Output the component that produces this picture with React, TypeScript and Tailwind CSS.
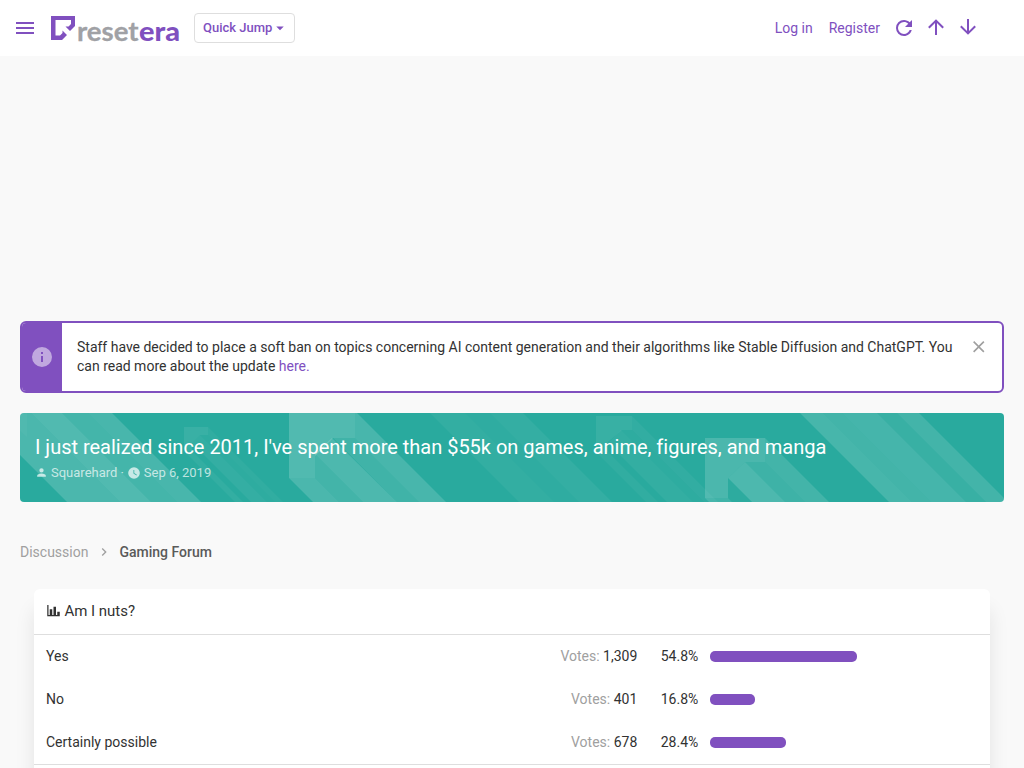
import React from "react";

const paths = {
  menu: "M3,6H21V8H3V6M3,11H21V13H3V11M3,16H21V18H3V16Z",
  refresh:
    "M17.65,6.35C16.2,4.9 14.21,4 12,4A8,8 0 0,0 4,12A8,8 0 0,0 12,20C15.73,20 18.84,17.45 19.73,14H17.65C16.83,16.33 14.61,18 12,18A6,6 0 0,1 6,12A6,6 0 0,1 12,6C13.66,6 15.14,6.69 16.22,7.78L13,11H20V4L17.65,6.35Z",
  up: "M13,20H11V8L5.5,13.5L4.08,12.08L12,4.16L19.92,12.08L18.5,13.5L13,8V20Z",
  down: "M11,4H13V16L18.5,10.5L19.92,11.92L12,19.84L4.08,11.92L5.5,10.5L11,16V4Z",
  chart: "M22,21H2V3H4V19H6V10H10V19H12V6H16V19H18V14H22V21Z",
  account:
    "M12,4A4,4 0 0,1 16,8A4,4 0 0,1 12,12A4,4 0 0,1 8,8A4,4 0 0,1 12,4M12,14C16.42,14 20,15.79 20,18V20H4V18C4,15.79 7.58,14 12,14Z",
  clock:
    "M12,2A10,10 0 0,0 2,12A10,10 0 0,0 12,22A10,10 0 0,0 22,12A10,10 0 0,0 12,2M16.2,16.2L11,13V7H12.5V12.2L17,14.9L16.2,16.2Z",
  info: "M13,9H11V7H13M13,17H11V11H13M12,2A10,10 0 0,0 2,12A10,10 0 0,0 12,22A10,10 0 0,0 22,12A10,10 0 0,0 12,2Z",
  close:
    "M19,6.41L17.59,5L12,10.59L6.41,5L5,6.41L10.59,12L5,17.59L6.41,19L12,13.41L17.59,19L19,17.59L13.41,12L19,6.41Z",
  caret: "M7,10L12,15L17,10H7Z",
  chevron: "M8.59,16.58L13.17,12L8.59,7.41L10,6L16,12L10,18L8.59,16.58Z",
};

function Icon({ name, className }: { name: keyof typeof paths; className: string }) {
  return (
    <svg viewBox="0 0 24 24" fill="currentColor" className={"shrink-0 " + className}>
      <path d={paths[name]} />
    </svg>
  );
}

function Logo() {
  return (
    <svg width="130" height="44" viewBox="0 -7 130 44" className="ml-[14px] shrink-0">
      <path
        fill="#8050bf"
        d="M0 3H24V13L19 18L14.5 13.5H17.5L20 11V7H4.5V22.5H9L11.5 20V17.5L16 22L11 27H0Z"
      />
      <g fontFamily="Lato, sans-serif" fontSize="26">
        <text x="26" y="27.5" fontWeight="700" fill="#a0a1a5" stroke="#a0a1a5" strokeWidth="0.3" textLength="61.5" lengthAdjust="spacingAndGlyphs">
          reset
        </text>
        <text x="88" y="27.5" fontWeight="900" fill="#8050bf" textLength="41" lengthAdjust="spacingAndGlyphs">
          era
        </text>
      </g>
    </svg>
  );
}

const shapes: [string, number][] = [
  ["0,0 11,0 100,89 47,89 0,42", 0.16],
  ["11,0 42,0 131,89 100,89", 0.19],
  ["42,0 68,0 157,89 131,89", 0.13],
  ["68,0 92,0 181,89 157,89", 0.15],
  ["0,0 7,0 7,24 0,18", 0.03],
  ["164,14 188,14 188,22 180,22 172,30 172,38 164,38", 0.08],
  ["164,38 172,38 223,89 215,89", 0.05],
  ["172,30 180,22 247,89 231,89", 0.055],
  ["180,22 188,22 255,89 247,89", 0.025],
  ["188,14 188,22 255,89 263,89", 0.04],
  ["269,0 335,0 335,25 313,25 303,35 295,43 295,65 269,65", 0.19],
  ["269,65 295,65 319,89 293,89", 0.16],
  ["295,65 295,41 343,89 319,89", 0.12],
  ["295,41 312,25 377,89 343,89", 0.17],
  ["313,25 335,25 399,89 377,89", 0.11],
  ["335,0 337,0 426,89 399,89 335,25", 0.15],
  ["410,0 445,0 534,89 499,89", 0.05],
  ["445,0 470,0 559,89 534,89", 0.03],
  ["470,0 503,0 592,89 559,89", 0.055],
  ["576,3 612,3 612,17 602,17 588,29 588,39 576,39", 0.07],
  ["576,39 588,39 638,89 626,89", 0.04],
  ["588,30 601,17 673,89 647,89", 0.05],
  ["612,3 612,17 684,89 698,89", 0.045],
  ["601,17 612,17 684,89 673,89", 0.025],
  ["685,25 745,25 745,49 725,49 708,65 708,85 685,85", 0.16],
  ["685,85 708,85 712,89 689,89", 0.11],
  ["708,65 725,49 765,89 732,89", 0.17],
  ["708,65 732,89 712,89 708,85", 0.02],
  ["725,49 745,49 785,89 765,89", 0.1],
  ["745,25 747,27 809,89 785,89 745,49", 0.12],
  ["780,0 803,0 892,89 869,89", 0.14],
  ["803,0 822,0 911,89 892,89", 0.12],
  ["822,0 857,0 946,89 911,89", 0.135],
  ["857,0 877,0 966,89 946,89", 0.07],
  ["877,0 899,0 984,85 984,89 966,89", 0.12],
];

const results = [
  { label: "Yes", votes: "1,309", percent: 54.8 },
  { label: "No", votes: "401", percent: 16.8 },
  { label: "Certainly possible", votes: "678", percent: 28.4 },
];

export default function App() {
  return (
    <div className="flex h-[768px] flex-col overflow-hidden bg-[#f9f9f9] font-[Roboto,sans-serif] text-sm text-[#323232]">
      <header className="flex h-14 shrink-0 items-center bg-white pl-[13px] pr-11 text-[#8050bf]">
        <Icon name="menu" className="size-6" />
        <Logo />
        <button className="ml-[13px] flex h-[30px] w-[101px] items-center rounded border border-[#dedede] pl-2 text-[13px] font-medium">
          Quick Jump
          <Icon name="caret" className="mb-px -ml-px size-[18px]" />
        </button>
        <nav className="ml-auto flex items-center">
          <a className="mr-4">Log in</a>
          <a className="mr-3">Register</a>
          <span className="flex gap-2">
            <Icon name="refresh" className="size-6" />
            <Icon name="up" className="-mt-px size-6" />
            <Icon name="down" className="-mt-px size-6" />
          </span>
        </nav>
      </header>

      <main className="flex flex-col px-5 pt-[265px]">
        <section className="flex h-[72px] shrink-0 overflow-hidden rounded-md border-2 border-[#8050bf] bg-white">
          <div className="flex w-10 shrink-0 items-center justify-center bg-[#8050bf] text-white/50">
            <Icon name="info" className="size-6" />
          </div>
          <p className="flex-1 whitespace-nowrap pl-[15px] pt-[14.5px] leading-[19px] tracking-[-0.005px]">
            Staff have decided to place a soft ban on topics concerning AI content generation and their algorithms like Stable Diffusion and ChatGPT. You
            <br />
            can read more about the update <a className="text-[#8050bf]">here.</a>
          </p>
          <Icon name="close" className="mr-[14px] mt-[13.5px] size-[19.5px] text-[#a0a0a0]" />
        </section>

        <section className="relative mt-5 h-[89px] shrink-0 overflow-hidden rounded bg-[#29aa9e] px-[15px] pt-[21px] text-white">
          <svg viewBox="0 0 984 89" className="absolute inset-0 h-[89px] w-[984px]" fill="white">
            {shapes.map(([points, opacity]) => (
              <polygon key={points} points={points} fillOpacity={opacity} />
            ))}
          </svg>
          <h1 className="relative text-[20px] leading-[26px] tracking-[-0.015px]">
            I just realized since 2011, I've spent more than $55k on games, anime, figures, and manga
          </h1>
          <div className="relative flex items-center pt-[3px] text-[13px] leading-[19px] text-white/70">
            <Icon name="account" className="mr-[3px] size-[13px]" />
            Squarehard
            <span className="mx-[3px]">·</span>
            <Icon name="clock" className="mr-[3px] size-[14px]" />
            Sep 6, 2019
          </div>
        </section>

        <nav className="mt-10 flex h-5 items-center text-[#a0a0a0]">
          <span>Discussion</span>
          <Icon name="chevron" className="mx-[7.5px] size-4" />
          <span className="font-medium text-[#5a5a5a]">Gaming Forum</span>
        </nav>

        <section className="mx-[14px] mt-[27px] rounded-t-md bg-white shadow-[0_20px_20px_rgba(0,0,0,0.09)]">
          <h2 className="flex h-[46px] items-center border-b border-[#dedede] pl-3 text-[15px]">
            <Icon name="chart" className="mb-[3px] mr-[3.5px] size-[15px]" />
            <span className="tracking-[-0.02px]">Am I nuts?</span>
          </h2>
          {results.map((r) => (
            <div key={r.label} className="flex h-[43px] items-center pb-px pl-3">
              <span className="flex-1">{r.label}</span>
              <span className="text-right">
                <span className="text-[#a0a0a0]">Votes:</span> {r.votes}
              </span>
              <span className="w-[61px] text-right">{r.percent}%</span>
              <span className="ml-[11.7px] mr-3 w-[268px] shrink-0 pt-px">
                <span className="block h-[11px] rounded-[5px] bg-[#8050bf]" style={{ width: r.percent + "%" }} />
              </span>
            </div>
          ))}
          <div className="h-10 border-t border-[#dedede]" />
        </section>
      </main>
    </div>
  );
}
